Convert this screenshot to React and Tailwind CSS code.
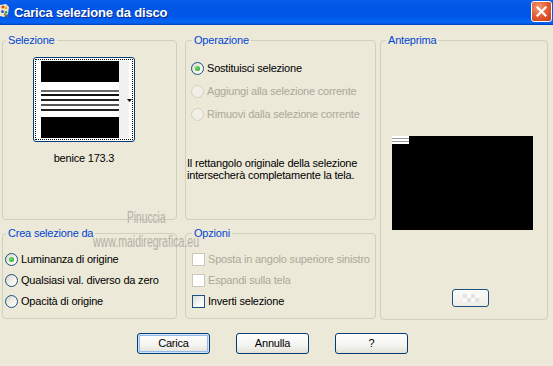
import React from "react";

function Radio({ checked, disabled, label }) {
  return (
    <div className="flex items-center h-[13px] gap-[3px]">
      <span
        className={
          disabled
            ? "w-[13px] h-[13px] rounded-full border border-[#d3d1c5] bg-[#f1efe6] shrink-0"
            : "w-[13px] h-[13px] rounded-full border border-[#1c5180] bg-[linear-gradient(135deg,#d9d6ca,#f4f3ee_60%,#ffffff)] shrink-0 flex items-center justify-center"
        }
      >
        {checked && (
          <span className="w-[5px] h-[5px] rounded-full bg-[radial-gradient(circle_at_40%_40%,#6be06b,#1f9a1f)]" />
        )}
      </span>
      <span className={disabled ? "text-[#aca899] whitespace-nowrap" : "text-black whitespace-nowrap"}>{label}</span>
    </div>
  );
}

function Check({ disabled, label }) {
  return (
    <div className="flex items-center h-[13px] gap-[3px]">
      <span
        className={
          disabled
            ? "w-[13px] h-[13px] border border-[#cac8bb] bg-white shrink-0"
            : "w-[13px] h-[13px] border border-[#1c5180] bg-[linear-gradient(135deg,#dcdcd7,#f6f6f3_60%,#ffffff)] shrink-0"
        }
      />
      <span className={disabled ? "text-[#aca899] whitespace-nowrap" : "text-black whitespace-nowrap"}>{label}</span>
    </div>
  );
}

function Legend({ children, ml }) {
  return (
    <legend className={`${ml} px-[2px] text-[#0046d5] leading-[13px]`}>{children}</legend>
  );
}

function XPButton({ children, def }) {
  return (
    <div
      className={
        def
          ? "w-[73px] h-[21px] rounded-[3px] border border-[#003c74] bg-[linear-gradient(to_bottom,#ffffff,#f3f3ef_60%,#e4e2d6)] shadow-[inset_0_0_0_1px_#cee7ff,inset_0_0_0_2px_#98b8ea] flex items-center justify-center text-black"
          : "w-[73px] h-[21px] rounded-[3px] border border-[#003c74] bg-[linear-gradient(to_bottom,#ffffff,#f3f3ef_60%,#e4e2d6)] flex items-center justify-center text-black"
      }
    >
      {children}
    </div>
  );
}

export default function App() {
  return (
    <div className="w-[553px] h-[366px] bg-[#ece9d8] overflow-hidden relative font-['Liberation_Sans',Arial,sans-serif] text-[11px] tracking-[-0.2px] text-black">
      {/* Title bar */}
      <div className="h-[25px] flex items-start bg-[linear-gradient(to_bottom,#0a5de8_0%,#0055e5_35%,#0157e9_70%,#0766f6_88%,#0356e0_95%,#0040b8_100%)]">
        <svg width="9" height="15" viewBox="0 0 9 15" className="mt-[3px] shrink-0">
          <path d="M0 2 L6 1 L9 4 L8 11 L4 14 L0 13 Z" fill="#f2e6c8" />
          <circle cx="3" cy="4" r="1.6" fill="#e24a1c" />
          <circle cx="6" cy="5" r="1.4" fill="#f0b020" />
          <circle cx="2.5" cy="8.5" r="1.5" fill="#2a5ad8" />
          <circle cx="6" cy="9.5" r="1.4" fill="#3aa040" />
          <path d="M4 11 L8 14" stroke="#8a5a2a" strokeWidth="1.5" />
        </svg>
        <span className="ml-[5px] mt-[5px] text-white font-bold text-[13px] leading-[16px] tracking-[-0.2px] whitespace-nowrap [text-shadow:1px_1px_0_#0b2a8a]">
          Carica selezione da disco
        </span>
        <div className="ml-auto mt-[1px] mr-[1px] w-[21px] h-[21px] rounded-[3px] border border-white bg-[radial-gradient(circle_at_35%_30%,#f09a78,#e2572e_55%,#c23c18)] flex items-center justify-center">
          <svg width="11" height="11" viewBox="0 0 11 11">
            <path d="M1.5 1.5 L9.5 9.5 M9.5 1.5 L1.5 9.5" stroke="white" strokeWidth="2.2" strokeLinecap="square" />
          </svg>
        </div>
      </div>

      {/* Main area */}
      <div className="flex pt-[9px] pl-[2px]">
        {/* Left column */}
        <div className="flex flex-col w-[175px] gap-[7px]">
          <fieldset className="border border-[#d0d0bf] rounded-[4px] h-[186px] w-[175px] m-0 p-0 min-w-0">
            <Legend ml="ml-[3px]">Selezione</Legend>
            <div className="relative mt-[10px] ml-[30px] w-[102px] h-[85px] rounded-[3px] border border-[#003c74] bg-white">
              <div className="absolute left-[7px] top-[3px] w-[78px] h-[77px] flex flex-col">
                <div className="h-[21px] bg-black" />
                <div className="h-[8px] bg-white" />
                <div className="h-[2px] bg-[#6a6a6a]" />
                <div className="h-[2px] bg-white" />
                <div className="h-[2px] bg-[#111]" />
                <div className="h-[3px] bg-white" />
                <div className="h-[2px] bg-[#222]" />
                <div className="h-[3px] bg-white" />
                <div className="h-[2px] bg-[#555]" />
                <div className="h-[3px] bg-white" />
                <div className="h-[2px] bg-[#222]" />
                <div className="h-[6px] bg-white" />
                <div className="h-[21px] bg-black" />
              </div>
              <div className="absolute left-[85px] top-[3px] w-[10px] h-[77px] bg-[#f1f1f1]" />
              <svg width="5" height="3" viewBox="0 0 5 3" className="absolute left-[93px] top-[41px]">
                <path d="M0 0 L5 0 L2.5 3 Z" fill="black" />
              </svg>
              <div className="absolute inset-[1px] border border-dotted border-black" />
            </div>
            <div className="mt-[10px] ml-[30px] w-[102px] text-center leading-[13px] text-[11px]">benice 173.3</div>
          </fieldset>

          <fieldset className="border border-[#d0d0bf] rounded-[4px] h-[92px] w-[175px] m-0 p-0 min-w-0">
            <Legend ml="ml-[3px]">Crea selezione da</Legend>
            <div className="mt-[13px] pl-[2px] flex flex-col gap-[8px]">
              <Radio checked label="Luminanza di origine" />
              <Radio label="Qualsiasi val. diverso da zero" />
              <Radio label="Opacità di origine" />
            </div>
          </fieldset>
        </div>

        {/* Middle column */}
        <div className="flex flex-col w-[191px] ml-[8px] gap-[7px]">
          <fieldset className="border border-[#d0d0bf] rounded-[4px] h-[186px] w-[191px] m-0 p-0 min-w-0">
            <Legend ml="ml-[6px]">Operazione</Legend>
            <div className="mt-[15px] pl-[5px] flex flex-col gap-[10px]">
              <Radio checked label="Sostituisci selezione" />
              <Radio disabled label="Aggiungi alla selezione corrente" />
              <Radio disabled label="Rimuovi dalla selezione corrente" />
            </div>
            <div className="mt-[36px] pl-[1px] leading-[12px]">
              Il rettangolo originale della selezione
              <br />
              intersecherà completamente la tela.
            </div>
          </fieldset>

          <fieldset className="border border-[#d0d0bf] rounded-[4px] h-[92px] w-[191px] m-0 p-0 min-w-0">
            <Legend ml="ml-[6px]">Opzioni</Legend>
            <div className="mt-[13px] pl-[6px] flex flex-col gap-[8px]">
              <Check disabled label="Sposta in angolo superiore sinistro" />
              <Check disabled label="Espandi sulla tela" />
              <Check label="Inverti selezione" />
            </div>
          </fieldset>
        </div>

        {/* Right column */}
        <fieldset className="ml-[4px] border border-[#d0d0bf] rounded-[4px] h-[286px] w-[168px] m-0 p-0 min-w-0">
          <Legend ml="ml-[5px]">Anteprima</Legend>
          <div className="mt-[89px] ml-[11px] w-[141px] h-[94px] bg-black">
            <div className="w-[17px] h-[8px] bg-white flex flex-col">
              <div className="h-[2px]" />
              <div className="h-[1px] bg-[#9a9a9a]" />
              <div className="h-[2px]" />
              <div className="h-[1px] bg-[#9a9a9a]" />
            </div>
          </div>
          <div className="mt-[59px] ml-[71px] w-[37px] h-[18px] rounded-[3px] border border-[#1c5180] bg-[linear-gradient(to_bottom,#fbfbf9,#eeede6)] flex items-center justify-center">
            <div className="grid grid-cols-4 w-[16px] h-[8px] opacity-60">
              <div className="bg-[#d8d8d8]" />
              <div className="bg-white" />
              <div className="bg-[#d8d8d8]" />
              <div className="bg-white" />
              <div className="bg-white" />
              <div className="bg-[#d8d8d8]" />
              <div className="bg-white" />
              <div className="bg-[#d8d8d8]" />
            </div>
          </div>
        </fieldset>
      </div>

      {/* Buttons */}
      <div className="flex mt-[13px] pl-[137px] gap-[26px]">
        <XPButton def>Carica</XPButton>
        <XPButton>Annulla</XPButton>
        <XPButton>?</XPButton>
      </div>

      {/* Watermark */}
      <div className="absolute left-[127px] top-[208px] text-[17px] leading-[20px] text-[#a7a399] opacity-80 origin-left scale-x-[0.6] tracking-normal whitespace-nowrap pointer-events-none">
        Pinuccia
      </div>
      <div className="absolute left-[93px] top-[232px] text-[17px] leading-[20px] text-[#a7a399] opacity-80 origin-left scale-x-[0.62] tracking-normal whitespace-nowrap pointer-events-none">
        www.maidiregrafica.eu
      </div>
    </div>
  );
}
